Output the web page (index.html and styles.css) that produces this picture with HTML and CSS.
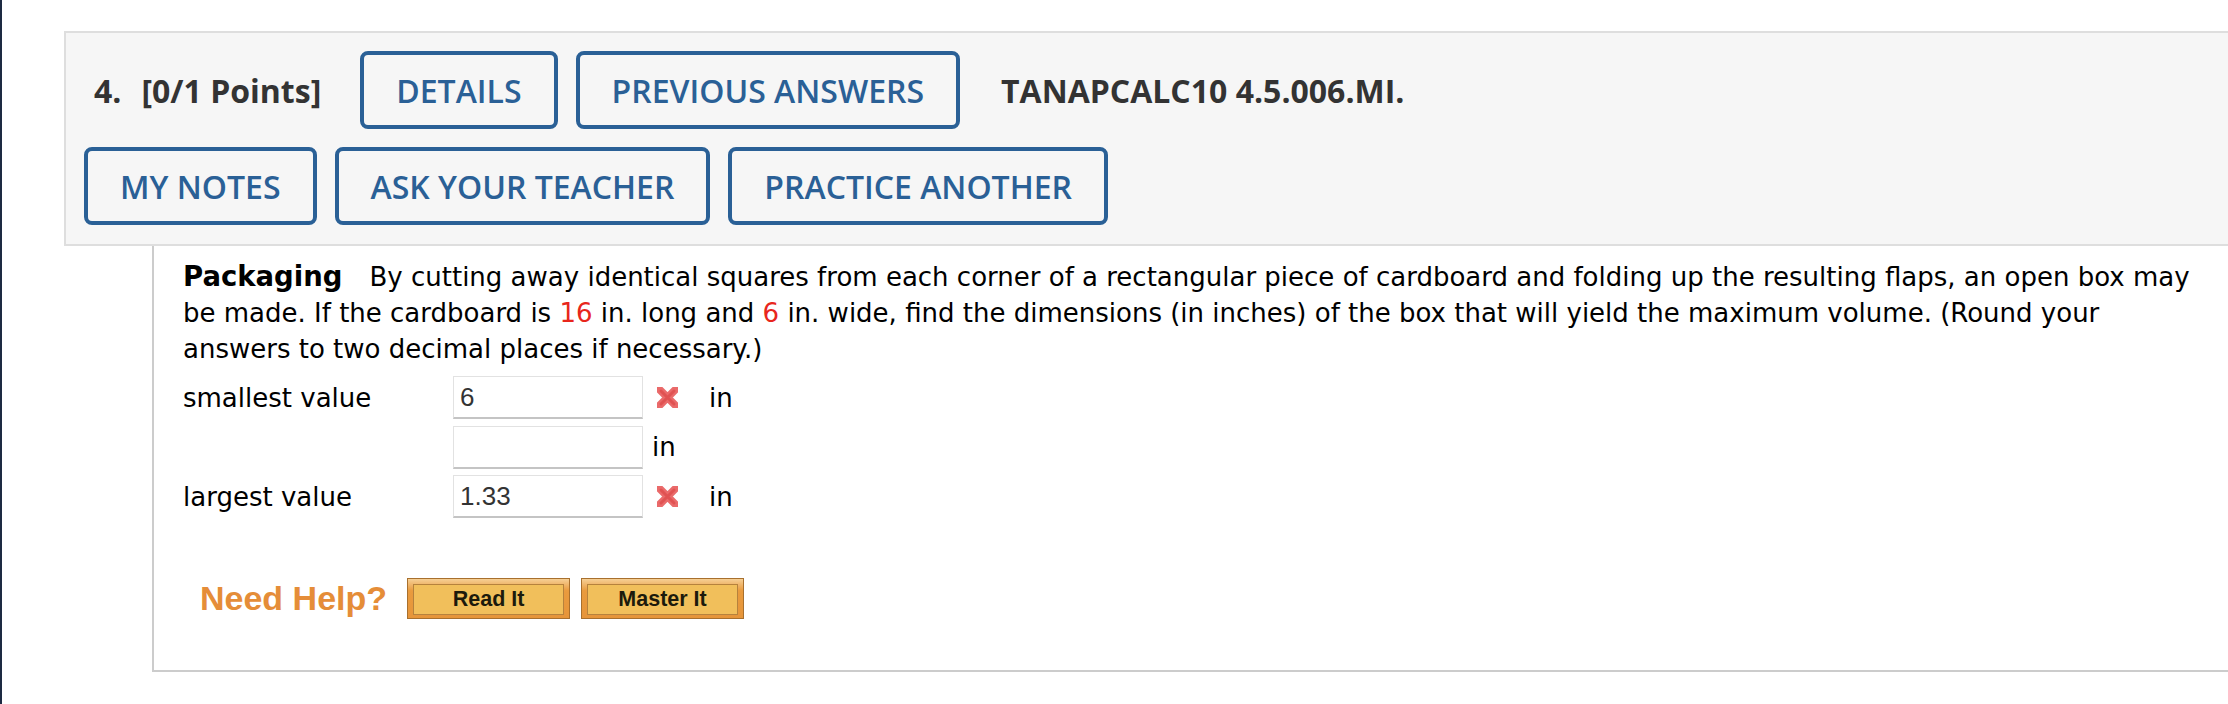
FILE: index.html
```html
<!DOCTYPE html>
<html lang="en">
<head>
<meta charset="utf-8">
<title>Question 4</title>
<link rel="stylesheet" href="styles.css">
</head>
<body>
<div class="page">
  <div class="panel">
    <div class="row">
      <span class="qnum">4.<span class="qpts">[0/1 Points]</span></span>
      <a class="btn">DETAILS</a>
      <a class="btn">PREVIOUS ANSWERS</a>
      <span class="qid">TANAPCALC10 4.5.006.MI.</span>
    </div>
    <div class="row">
      <a class="btn">MY NOTES</a>
      <a class="btn">ASK YOUR TEACHER</a>
      <a class="btn">PRACTICE ANOTHER</a>
    </div>
  </div>
  <div class="question">
    <p class="prompt"><b class="topic">Packaging</b>By cutting away identical squares from each corner of a rectangular piece of cardboard and folding up the resulting flaps, an open box may be made. If the cardboard is <span class="red">16</span> in. long and <span class="red">6</span> in. wide, find the dimensions (in inches) of the box that will yield the maximum volume. (Round your answers to two decimal places if necessary.)</p>
    <div class="answers">
      <div class="ans-row">
        <span class="label">smallest value</span>
        <span class="field">6</span>
        <svg class="xmark" viewBox="0 0 27 27" aria-hidden="true">
          <defs><filter id="soft1"><feGaussianBlur stdDeviation="0.6"/></filter></defs>
          <path class="xo" d="M5 5 L22 22 M22 5 L5 22" filter="url(#soft1)"/>
          <path class="xi" d="M7 7 L20 20 M20 7 L7 20"/>
        </svg>
        <span class="unit unit-after-x">in</span>
      </div>
      <div class="ans-row">
        <span class="label"></span>
        <span class="field"></span>
        <span class="unit">in</span>
      </div>
      <div class="ans-row">
        <span class="label">largest value</span>
        <span class="field">1.33</span>
        <svg class="xmark" viewBox="0 0 27 27" aria-hidden="true">
          <defs><filter id="soft2"><feGaussianBlur stdDeviation="0.6"/></filter></defs>
          <path class="xo" d="M5 5 L22 22 M22 5 L5 22" filter="url(#soft2)"/>
          <path class="xi" d="M7 7 L20 20 M20 7 L7 20"/>
        </svg>
        <span class="unit unit-after-x">in</span>
      </div>
    </div>
    <div class="help">
      <span class="need">Need Help?</span>
      <a class="help-btn"><span>Read It</span></a>
      <a class="help-btn"><span>Master It</span></a>
    </div>
  </div>
</div>
</body>
</html>
```

FILE: styles.css
```css
html, body {
  margin: 0;
  padding: 0;
  background: #ffffff;
}

.page {
  min-height: 704px;
  box-sizing: border-box;
  border-left: 2px solid #1d2a42;
  overflow: hidden;
}

.panel {
  margin: 31px 0 0 62px;
  background: #f6f6f6;
  border: 2px solid #dedede;
  border-right: none;
  padding: 18px 0 19px 18px;
  display: flex;
  flex-direction: column;
  gap: 18px;
}

.row {
  display: flex;
  align-items: center;
  gap: 18px;
}

.qnum {
  font-family: "Open Sans", "Liberation Sans", sans-serif;
  font-weight: 700;
  font-size: 32px;
  color: #333333;
  padding-left: 10px;
  margin-right: 21px;
  white-space: nowrap;
}

.qpts {
  margin-left: 20px;
}

.qid {
  font-family: "Open Sans", "Liberation Sans", sans-serif;
  font-weight: 700;
  font-size: 32px;
  color: #333333;
  margin-left: 23px;
  white-space: nowrap;
}

.btn {
  box-sizing: border-box;
  height: 78px;
  display: flex;
  align-items: center;
  padding: 0 32px;
  border: 4px solid #2a6096;
  border-radius: 8px;
  background: #f6f6f6;
  color: #2a6096;
  font-family: "Open Sans", "Liberation Sans", sans-serif;
  font-weight: 600;
  font-size: 32px;
  white-space: nowrap;
}

.question {
  margin-left: 150px;
  border-left: 2px solid #cccccc;
  border-bottom: 2px solid #cccccc;
  padding: 12px 28px 51px 29px;
  font-family: "DejaVu Sans", Verdana, sans-serif;
  font-size: 26px;
  color: #000000;
}

.prompt {
  margin: 0;
  line-height: 36px;
}

.topic {
  font-size: 27.5px;
  margin-right: 27px;
}

.red {
  color: #e8261c;
}

.answers {
  margin-top: 9px;
  display: flex;
  flex-direction: column;
  gap: 6.5px;
}

.ans-row {
  display: flex;
  align-items: center;
  height: 43px;
}

.label {
  width: 270px;
  flex: none;
}

.field {
  box-sizing: border-box;
  width: 190px;
  height: 43px;
  flex: none;
  border: 1px solid #e2e2e2;
  border-bottom: 2px solid #c4c4c4;
  background: #ffffff;
  font-family: "Liberation Sans", Arial, sans-serif;
  font-size: 26px;
  color: #333333;
  padding: 0 6px;
  display: flex;
  align-items: center;
}

.xmark {
  width: 27px;
  height: 27px;
  margin-left: 11px;
  flex: none;
}

.xmark .xo {
  stroke: #ea6b6b;
  stroke-width: 7.5;
  stroke-linecap: round;
  fill: none;
}

.xmark .xi {
  stroke: #e05252;
  stroke-width: 3;
  stroke-linecap: round;
  fill: none;
}

.unit {
  margin-left: 9px;
}

.unit-after-x {
  margin-left: 28px;
}

.help {
  margin-top: 60px;
  display: flex;
  align-items: center;
}

.need {
  font-family: "Liberation Sans", Arial, sans-serif;
  font-weight: 700;
  font-size: 34px;
  color: #e58d38;
  padding-left: 17px;
  margin-right: 20px;
}

.help-btn {
  box-sizing: border-box;
  width: 163px;
  height: 41px;
  border: 1px solid #a8702e;
  background: linear-gradient(#f6cf95, #e99b3e 30%, #e6953a);
  padding: 5px 5px 3px 5px;
  margin-right: 11px;
}

.help-btn span {
  box-sizing: border-box;
  display: flex;
  align-items: center;
  justify-content: center;
  height: 100%;
  border: 1px solid #b6823d;
  background: #f1bf5b;
  font-family: "Liberation Sans", Arial, sans-serif;
  font-weight: 700;
  font-size: 21.5px;
  color: #1c1a0c;
}
```
